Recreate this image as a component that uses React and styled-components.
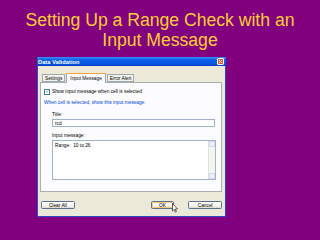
import React from "react";
import styled, { createGlobalStyle } from "styled-components";

const GlobalStyle = createGlobalStyle`
  html, body {
    margin: 0;
    padding: 0;
    background: #800080;
  }
`;

const Slide = styled.div`
  width: 320px;
  height: 240px;
  background: #800080;
  display: flex;
  flex-direction: column;
  align-items: flex-start;
  overflow: hidden;
  position: relative;
`;

const Heading = styled.h1`
  width: 320px;
  margin: 0;
  padding-top: 10px;
  text-align: center;
  font-family: "Liberation Sans", Arial, sans-serif;
  font-weight: 400;
  font-size: 17.6px;
  line-height: 20px;
  color: #ffcc33;
`;

const Window = styled.div`
  margin: 7px 0 0 37px;
  width: 189px;
  height: 160px;
  background: #ece9d8;
  border: 1px solid #2a4bc8;
  border-top: none;
  box-sizing: border-box;
  display: flex;
  flex-direction: column;
  font-family: "Liberation Sans", Tahoma, sans-serif;
  font-size: 4.8px;
  color: #000;
  position: relative;
`;

const TitleBar = styled.div`
  height: 9px;
  margin: 0 -1px;
  background: linear-gradient(180deg, #3a8cff 0%, #0a5fe8 35%, #0053e0 80%, #003dc0 100%);
  display: flex;
  align-items: center;
  justify-content: space-between;
  padding: 0 2px 0 1px;
  border-radius: 2px 2px 0 0;
`;

const TitleText = styled.span`
  color: #fff;
  font-weight: 700;
  font-size: 5.6px;
  letter-spacing: 0.1px;
`;

const CloseBox = styled.div`
  width: 7px;
  height: 7px;
  border-radius: 1px;
  background: #e0583a;
  border: 0.5px solid #fff;
  box-sizing: border-box;
  display: flex;
  align-items: center;
  justify-content: center;
`;

const Body = styled.div`
  flex: 1;
  display: flex;
  flex-direction: column;
  padding: 6px 3px 0 2px;
`;

const TabRow = styled.div`
  display: flex;
  align-items: flex-end;
  height: 10px;
  padding-left: 2px;
  gap: 1px;
`;

const Tab = styled.div`
  height: ${(p) => (p.$active ? "10px" : "8px")};
  padding: 0 ${(p) => (p.$active ? "3px" : "2px")};
  margin-bottom: ${(p) => (p.$active ? "-1px" : "0")};
  background: ${(p) => (p.$active ? "#fcfcfe" : "#f3f3ef")};
  border: 0.5px solid #a0a8ac;
  border-bottom: ${(p) => (p.$active ? "none" : "0.5px solid #a0a8ac")};
  border-top: ${(p) => (p.$active ? "1px solid #f3a53a" : "0.5px solid #a0a8ac")};
  box-sizing: border-box;
  display: flex;
  align-items: center;
  position: relative;
  z-index: ${(p) => (p.$active ? 2 : 1)};
  white-space: nowrap;
`;

const Panel = styled.div`
  height: 110px;
  background: #fcfcfe;
  border: 0.5px solid #a8b0b4;
  box-sizing: border-box;
  display: flex;
  flex-direction: column;
  padding: 5px 6px 0 3px;
`;

const CheckRow = styled.div`
  display: flex;
  align-items: center;
  gap: 2px;
  height: 7px;
`;

const CheckBox = styled.div`
  width: 6px;
  height: 6px;
  border: 0.5px solid #4a7aa0;
  background: #fff;
  box-sizing: border-box;
  display: flex;
  align-items: center;
  justify-content: center;
`;

const GroupLabel = styled.div`
  color: #0046d5;
  margin-top: 5px;
  height: 6px;
  line-height: 6px;
`;

const Field = styled.div`
  display: flex;
  flex-direction: column;
  padding-left: 8px;
  margin-top: ${(p) => p.$top}px;
`;

const FieldLabel = styled.div`
  height: 6px;
  line-height: 6px;
  margin-bottom: 1px;
`;

const TextInput = styled.div`
  height: 8px;
  background: #fff;
  border: 0.5px solid #9fb4ca;
  box-sizing: border-box;
  padding-left: 2px;
  display: flex;
  align-items: center;
`;

const TextArea = styled.div`
  height: 40px;
  background: #fff;
  border: 0.5px solid #9fb4ca;
  box-sizing: border-box;
  display: flex;
  margin-right: -1px;
`;

const AreaText = styled.div`
  flex: 1;
  padding: 2px 2px;
  white-space: pre;
`;

const ScrollTrack = styled.div`
  width: 6px;
  background: #f4f4f0;
  border-left: 0.5px solid #e0e0dc;
  display: flex;
  flex-direction: column;
  justify-content: space-between;
`;

const ScrollArrow = styled.div`
  height: 6px;
  background: #eef0f6;
  border: 0.5px solid #d4dbe8;
  box-sizing: border-box;
`;

const ButtonRow = styled.div`
  display: flex;
  align-items: center;
  padding: 9px 0 0 1px;
  gap: 14px;
`;

const Button = styled.div`
  width: ${(p) => p.$w}px;
  height: 8px;
  border: 0.5px solid #5a7090;
  border-radius: 1.5px;
  background: linear-gradient(180deg, #ffffff 0%, #f2f2ec 70%, #dcd6cc 100%);
  box-shadow: ${(p) => (p.$default ? "inset 0 0 0 1px #f4c877" : "none")};
  box-sizing: border-box;
  display: flex;
  align-items: center;
  justify-content: center;
  margin-left: ${(p) => p.$ml || 0}px;
  position: relative;
`;

const Cursor = styled.svg`
  position: absolute;
  left: 172px;
  top: 203px;
`;

export default function App() {
  return (
    <>
      <GlobalStyle />
      <Slide>
        <Heading>
          Setting Up a Range Check with an
          <br />
          Input Message
        </Heading>
        <Window>
          <TitleBar>
            <TitleText>Data Validation</TitleText>
            <CloseBox>
              <svg width="5" height="5" viewBox="0 0 5 5">
                <path d="M1 1 L4 4 M4 1 L1 4" stroke="#fff" strokeWidth="0.9" />
              </svg>
            </CloseBox>
          </TitleBar>
          <Body>
            <TabRow>
              <Tab>Settings</Tab>
              <Tab $active>Input Message</Tab>
              <Tab>Error Alert</Tab>
            </TabRow>
            <Panel>
              <CheckRow>
                <CheckBox>
                  <svg width="5" height="5" viewBox="0 0 5 5">
                    <path d="M1 2.4 L2 3.5 L4 1.2" fill="none" stroke="#21a121" strokeWidth="0.9" />
                  </svg>
                </CheckBox>
                <span>Show input message when cell is selected</span>
              </CheckRow>
              <GroupLabel>When cell is selected, show this input message:</GroupLabel>
              <Field $top={6}>
                <FieldLabel>Title:</FieldLabel>
                <TextInput>rcd</TextInput>
              </Field>
              <Field $top={6}>
                <FieldLabel>Input message:</FieldLabel>
                <TextArea>
                  <AreaText>Range:  10 to 26</AreaText>
                  <ScrollTrack>
                    <ScrollArrow />
                    <ScrollArrow />
                  </ScrollTrack>
                </TextArea>
              </Field>
            </Panel>
            <ButtonRow>
              <Button $w={34}>Clear All</Button>
              <Button $w={24} $default $ml={62}>OK</Button>
              <Button $w={34}>Cancel</Button>
            </ButtonRow>
          </Body>
        </Window>
        <Cursor width="6" height="10" viewBox="0 0 6 10">
          <path d="M0.5 0.5 L0.5 8 L2.2 6.4 L3.4 9.2 L4.4 8.7 L3.3 6 L5.5 6 Z" fill="#fff" stroke="#000" strokeWidth="0.6" />
        </Cursor>
      </Slide>
    </>
  );
}
